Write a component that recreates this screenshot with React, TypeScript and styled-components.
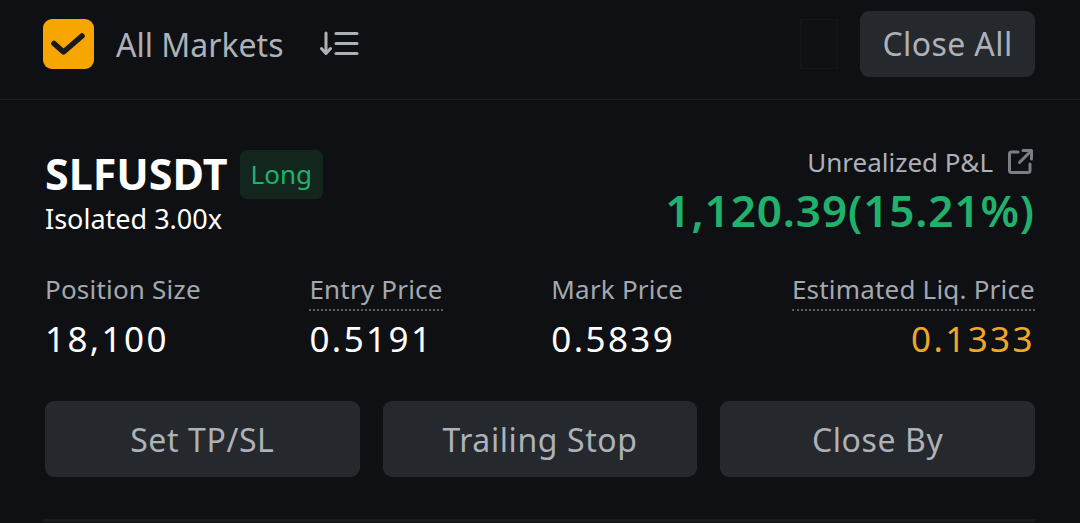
import React from "react";
import styled, { createGlobalStyle } from "styled-components";

const Global = createGlobalStyle`
  html, body { margin: 0; padding: 0; background: #0f1014; }
  body { width: 1080px; height: 523px; overflow: hidden; font-family: "Noto Sans", "Open Sans", sans-serif; }
  * { box-sizing: border-box; }
`;

const Page = styled.div`
  width: 1080px;
  height: 523px;
  overflow: hidden;
  background: #0f1014;
  display: flex;
  flex-direction: column;
  & > * { flex-shrink: 0; }
`;

const Toolbar = styled.div`
  height: 100px;
  display: flex;
  align-items: center;
  padding: 0 45px 0 43px;
  border-bottom: 1px solid #1d1f24;
`;

const CheckBox = styled.div`
  width: 51px;
  height: 50px;
  border-radius: 9px;
  background: #f7a600;
  display: flex;
  align-items: center;
  justify-content: center;
  margin-top: -11px;
`;

const FilterLabel = styled.span`
  margin-left: 22px;
  font-size: 32px;
  color: #adb1b8;
  margin-top: -11px;
`;

const SortIcon = styled.svg`
  margin-left: 36px;
  margin-top: -11px;
`;

const Spacer = styled.div`
  flex: 1;
`;

const Ghost = styled.div`
  width: 38px;
  height: 50px;
  background: #101115;
  border: 1px solid #15161a;
  margin-right: 22px;
  margin-top: -11px;
`;

const TopButton = styled.button`
  width: 175px;
  height: 66px;
  border: none;
  border-radius: 9px;
  background: #25282c;
  color: #adb1b8;
  font-family: inherit;
  font-size: 32px;
  letter-spacing: 0.4px;
  margin-top: -12px;
  padding: 0;
`;

const Card = styled.div`
  padding: 49px 45px 0 45px;
  display: flex;
  flex-direction: column;
`;

const Header = styled.div`
  display: flex;
  justify-content: space-between;
  align-items: flex-start;
`;

const TitleCol = styled.div`
  display: flex;
  flex-direction: column;
`;

const TitleRow = styled.div`
  display: flex;
  align-items: center;
`;

const Symbol = styled.span`
  font-size: 43px;
  font-weight: 700;
  color: #ffffff;
  line-height: 50px;
`;

const Badge = styled.span`
  margin-left: 12px;
  height: 49px;
  padding: 0 11px;
  border-radius: 7px;
  background: #12261d;
  color: #20b26c;
  font-size: 26px;
  display: flex;
  align-items: center;
`;

const SubText = styled.span`
  font-size: 27px;
  color: #ffffff;
  line-height: 36px;
  margin-top: 2px;
`;

const PnlCol = styled.div`
  display: flex;
  flex-direction: column;
  align-items: flex-end;
  margin-top: -5px;
`;

const PnlLabelRow = styled.div`
  display: flex;
  align-items: center;
  gap: 12px;
  font-size: 26px;
  color: #adb1b8;
  line-height: 36px;
  height: 36px;
`;

const PnlValue = styled.span`
  font-size: 44px;
  font-weight: 600;
  letter-spacing: 0.9px;
  color: #20b26c;
  line-height: 60px;
`;

const Stats = styled.div`
  display: flex;
  justify-content: space-between;
  margin-top: 32px;
`;

const Stat = styled.div<{ $right?: boolean }>`
  display: flex;
  flex-direction: column;
  align-items: ${(p) => (p.$right ? "flex-end" : "flex-start")};
`;

const StatLabel = styled.span<{ $dotted?: boolean }>`
  font-size: 26px;
  letter-spacing: 0.2px;
  color: #a4a8af;
  line-height: 34px;
  padding-bottom: 3px;
  border-bottom: 2px dotted ${(p) => (p.$dotted ? "#5a5e66" : "transparent")};
`;

const StatValue = styled.span<{ $color?: string }>`
  font-size: 35px;
  letter-spacing: 2.4px;
  color: ${(p) => p.$color || "#ffffff"};
  line-height: 44px;
  margin-top: 6px;
`;

const Actions = styled.div`
  display: grid;
  grid-template-columns: repeat(3, 1fr);
  gap: 23px;
  margin-top: 40px;
`;

const ActionButton = styled.button`
  height: 76px;
  border: none;
  border-radius: 9px;
  background: #25282c;
  color: #adb1b8;
  font-family: inherit;
  font-size: 32px;
  letter-spacing: 0.6px;
  padding: 0;
`;

const BottomLine = styled.div`
  margin: 42px 45px 0 43px;
  height: 3px;
  background: #1a1b20;
`;

export default function App() {
  return (
    <>
      <Global />
      <Page>
        <Toolbar>
          <CheckBox>
            <svg width="51" height="50" viewBox="0 0 51 50">
              <polyline
                points="11,24.5 20.5,33 39,17"
                fill="none"
                stroke="#1a1a1c"
                strokeWidth="5.5"
                strokeLinecap="round"
                strokeLinejoin="round"
              />
            </svg>
          </CheckBox>
          <FilterLabel>All Markets</FilterLabel>
          <SortIcon width="40" height="26" viewBox="0 0 40 26">
            <g fill="none" stroke="#adb1b8" strokeWidth="3" strokeLinecap="round" strokeLinejoin="round">
              <line x1="6" y1="2" x2="6" y2="22" />
              <polyline points="1.5,17.5 6,22.5 10.5,17.5" />
              <line x1="16" y1="2.5" x2="37" y2="2.5" />
              <line x1="16" y1="12.5" x2="37" y2="12.5" />
              <line x1="16" y1="22.5" x2="37" y2="22.5" />
            </g>
          </SortIcon>
          <Spacer />
          <Ghost />
          <TopButton>Close All</TopButton>
        </Toolbar>
        <Card>
          <Header>
            <TitleCol>
              <TitleRow>
                <Symbol>SLFUSDT</Symbol>
                <Badge>Long</Badge>
              </TitleRow>
              <SubText>Isolated 3.00x</SubText>
            </TitleCol>
            <PnlCol>
              <PnlLabelRow>
                <span>Unrealized P&amp;L</span>
                <svg width="30" height="30" viewBox="0 0 30 30">
                  <g fill="none" stroke="#7a7e86" strokeWidth="3" strokeLinecap="round" strokeLinejoin="round">
                    <path d="M13 5H6.5a2 2 0 0 0-2 2v16.5a2 2 0 0 0 2 2H23a2 2 0 0 0 2-2V17" />
                    <path d="M18 3.5h8.5V12" />
                    <path d="M26 4L14.5 15.5" />
                  </g>
                </svg>
              </PnlLabelRow>
              <PnlValue>1,120.39(15.21%)</PnlValue>
            </PnlCol>
          </Header>
          <Stats>
            <Stat>
              <StatLabel>Position Size</StatLabel>
              <StatValue>18,100</StatValue>
            </Stat>
            <Stat>
              <StatLabel $dotted>Entry Price</StatLabel>
              <StatValue>0.5191</StatValue>
            </Stat>
            <Stat>
              <StatLabel>Mark Price</StatLabel>
              <StatValue>0.5839</StatValue>
            </Stat>
            <Stat $right>
              <StatLabel $dotted>Estimated Liq. Price</StatLabel>
              <StatValue $color="#eda82a">0.1333</StatValue>
            </Stat>
          </Stats>
          <Actions>
            <ActionButton>Set TP/SL</ActionButton>
            <ActionButton>Trailing Stop</ActionButton>
            <ActionButton>Close By</ActionButton>
          </Actions>
        </Card>
        <BottomLine />
      </Page>
    </>
  );
}
